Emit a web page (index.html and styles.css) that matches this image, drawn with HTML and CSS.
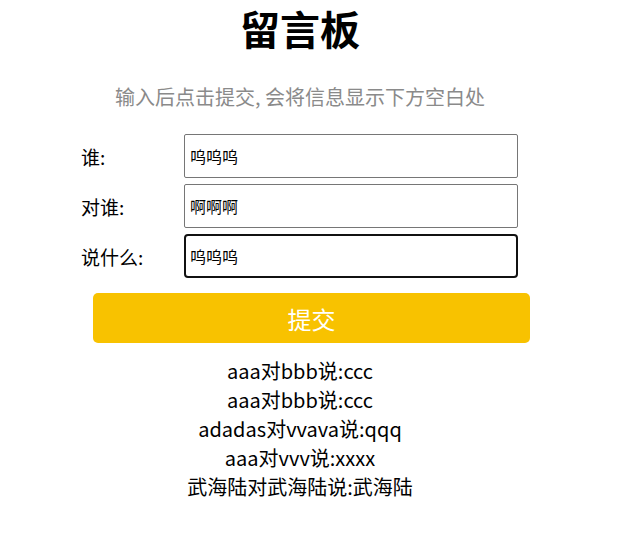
FILE: index.html
```html
<!DOCTYPE html>
<html lang="zh">
<head>
<meta charset="utf-8">
<title>留言板</title>
<link rel="stylesheet" href="styles.css">
</head>
<body>
<div class="page">
  <h1 class="title">留言板</h1>
  <p class="hint">输入后点击提交, 会将信息显示下方空白处</p>
  <div class="form">
    <div class="row">
      <label class="label">谁:</label>
      <input class="field" type="text" value="呜呜呜">
    </div>
    <div class="row">
      <label class="label">对谁:</label>
      <input class="field" type="text" value="啊啊啊">
    </div>
    <div class="row">
      <label class="label">说什么:</label>
      <input class="field field-active" type="text" value="呜呜呜">
    </div>
  </div>
  <button class="submit" type="button">提交</button>
  <div class="messages">
    <div class="msg">aaa对bbb说:ccc</div>
    <div class="msg">aaa对bbb说:ccc</div>
    <div class="msg">adadas对vvava说:qqq</div>
    <div class="msg">aaa对vvv说:xxxx</div>
    <div class="msg">武海陆对武海陆说:武海陆</div>
  </div>
</div>
</body>
</html>
```
FILE: styles.css
```css
html, body {
  margin: 0;
  padding: 0;
  background: #fff;
}
body {
  font-family: "Noto Sans CJK SC", "Noto Sans", sans-serif;
  color: #000;
}
.page {
  width: 600px;
  display: flex;
  flex-direction: column;
}
.title {
  margin: 0;
  font-size: 40px;
  line-height: 56px;
  font-weight: 700;
  text-align: center;
}
.hint {
  margin: 26px 0 0;
  font-size: 20px;
  line-height: 30px;
  color: #8a8a8a;
  text-align: center;
}
.form {
  margin-top: 22px;
  padding-left: 81px;
  display: flex;
  flex-direction: column;
  gap: 6px;
}
.row {
  display: flex;
  align-items: center;
  height: 44px;
}
.label {
  width: 103px;
  font-size: 19px;
}
.field {
  box-sizing: border-box;
  width: 334px;
  height: 44px;
  margin: 0;
  padding: 0 5px;
  border: 1px solid #767676;
  border-radius: 2px;
  font-family: "Noto Sans CJK SC", "Noto Sans", sans-serif;
  font-size: 16px;
  color: #000;
  background: #fff;
  outline: none;
}
.field-active {
  border: 2px solid #111;
  border-radius: 4px;
  padding: 0 4px;
}
.submit {
  margin: 15px 0 0 93px;
  width: 437px;
  height: 50px;
  border: none;
  border-radius: 5px;
  background: #f8c200;
  color: #fff;
  font-family: "Noto Sans CJK SC", "Noto Sans", sans-serif;
  font-size: 24px;
  padding: 0;
}
.messages {
  margin-top: 13px;
  display: flex;
  flex-direction: column;
  align-items: center;
}
.msg {
  font-size: 20px;
  line-height: 29px;
}
```
